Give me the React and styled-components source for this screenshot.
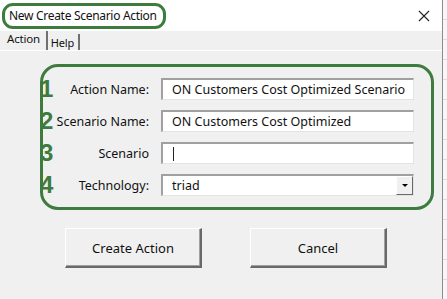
import React from "react";
import styled, { createGlobalStyle } from "styled-components";

const GlobalStyle = createGlobalStyle`
  html, body {
    margin: 0;
    padding: 0;
    background: #f4f4f4;
  }
  * {
    box-sizing: border-box;
  }
`;

const Page = styled.div`
  display: flex;
  width: 447px;
  height: 299px;
  overflow: hidden;
  font-family: "Noto Sans", "Open Sans", sans-serif;
  color: #111;
`;

const Sheet = styled.div`
  flex: 1;
  background: repeating-linear-gradient(
    to bottom,
    #f7f7f7 0px,
    #f7f7f7 19px,
    #dddddd 19px,
    #dddddd 20px
  );
`;

const Window = styled.div`
  width: 443px;
  height: 299px;
  display: flex;
  flex-direction: column;
  background: #f0f0f0;
  border-right: 1px solid #8c8c8c;
`;

const TitleBar = styled.div`
  height: 31px;
  background: #ffffff;
  display: flex;
  align-items: center;
  justify-content: space-between;
  padding: 0 12px 0 2px;
`;

const TitleBadge = styled.div`
  border: 3px solid #3e7b3e;
  border-radius: 11px;
  padding: 1px 6px 2px 4px;
  font-size: 12px;
  letter-spacing: -0.3px;
  line-height: 17px;
`;

const CloseIcon = styled.svg`
  width: 12px;
  height: 12px;
`;

const TabStrip = styled.div`
  height: 20px;
  display: flex;
  align-items: flex-end;
  padding-left: 4px;
  border-bottom: 1px solid #ffffff;
`;

const Tab = styled.div`
  font-size: ${(p) => (p.active ? "11.5px" : "11px")};
  letter-spacing: -0.2px;
  padding: ${(p) => (p.active ? "0 6px 2px 3px" : "0 4px 0 3px")};
  height: ${(p) => (p.active ? "19px" : "16px")};
  line-height: ${(p) => (p.active ? "16px" : "17px")};
  border-right: 2px solid #707070;
`;

const Group = styled.div`
  margin: 13px 8px 0 40px;
  border: 3px solid #3e7b3e;
  border-radius: 18px;
  padding: 11px 17px 11px 0;
  display: grid;
  grid-template-columns: 12px 1fr 253px;
  grid-auto-rows: 22px;
  row-gap: 10px;
  align-items: center;
`;

const Num = styled.span`
  margin-left: -3px;
  font-size: 24px;
  font-weight: 700;
  color: #3e7b3e;
  line-height: 22px;
  font-family: "Liberation Sans", "Noto Sans", sans-serif;
`;

const Label = styled.label`
  text-align: right;
  padding-right: 12px;
  font-size: 12.5px;
  white-space: nowrap;
`;

const Field = styled.div`
  height: 22px;
  background: #ffffff;
  border-top: 2px solid #a0a0a0;
  border-left: 2px solid #a0a0a0;
  border-right: 1px solid #e3e3e3;
  border-bottom: 1px solid #e3e3e3;
  display: flex;
  align-items: center;
  padding-left: 9px;
  font-size: 12.5px;
  white-space: nowrap;
  overflow: hidden;
`;

const Caret = styled.span`
  display: inline-block;
  width: 1px;
  height: 14px;
  background: #222;
  margin-left: 1px;
`;

const Combo = styled(Field)`
  padding-right: 0;
  justify-content: space-between;
`;

const DropButton = styled.div`
  width: 17px;
  height: 19px;
  background: #f0f0f0;
  border-top: 1px solid #ffffff;
  border-left: 1px solid #ffffff;
  border-right: 1px solid #696969;
  border-bottom: 1px solid #696969;
  display: flex;
  align-items: center;
  justify-content: center;
`;

const Arrow = styled.span`
  width: 0;
  height: 0;
  border-left: 3px solid transparent;
  border-right: 3px solid transparent;
  border-top: 3px solid #000;
`;

const ButtonRow = styled.div`
  display: flex;
  gap: 48px;
  padding: 18px 0 0 65px;
`;

const Button = styled.button`
  width: 137px;
  height: 40px;
  background: #f0f0f0;
  border-top: 1px solid #ffffff;
  border-left: 1px solid #ffffff;
  border-right: 2px solid #696969;
  border-bottom: 2px solid #696969;
  box-shadow: inset -1px -1px 0 #a0a0a0;
  font-family: "Noto Sans", "Open Sans", sans-serif;
  font-size: 13px;
  color: #111;
  padding: 0;
`;

const fields = [
  { n: "1", label: "Action Name:", value: "ON Customers Cost Optimized Scenario" },
  { n: "2", label: "Scenario Name:", value: "ON Customers Cost Optimized" },
  { n: "3", label: "Scenario", value: null },
];

export default function App() {
  return (
    <Page>
      <GlobalStyle />
      <Window>
        <TitleBar>
          <TitleBadge>New Create Scenario Action</TitleBadge>
          <CloseIcon viewBox="0 0 12 12">
            <path d="M1 1 L11 11 M11 1 L1 11" stroke="#222" strokeWidth="1.1" />
          </CloseIcon>
        </TitleBar>
        <TabStrip>
          <Tab active>Action</Tab>
          <Tab>Help</Tab>
        </TabStrip>
        <Group>
          {fields.map((f) => (
            <React.Fragment key={f.n}>
              <Num>{f.n}</Num>
              <Label>{f.label}</Label>
              <Field>{f.value === null ? <Caret /> : f.value}</Field>
            </React.Fragment>
          ))}
          <Num>4</Num>
          <Label>Technology:</Label>
          <Combo>
            triad
            <DropButton>
              <Arrow />
            </DropButton>
          </Combo>
        </Group>
        <ButtonRow>
          <Button>Create Action</Button>
          <Button>Cancel</Button>
        </ButtonRow>
      </Window>
      <Sheet />
    </Page>
  );
}
